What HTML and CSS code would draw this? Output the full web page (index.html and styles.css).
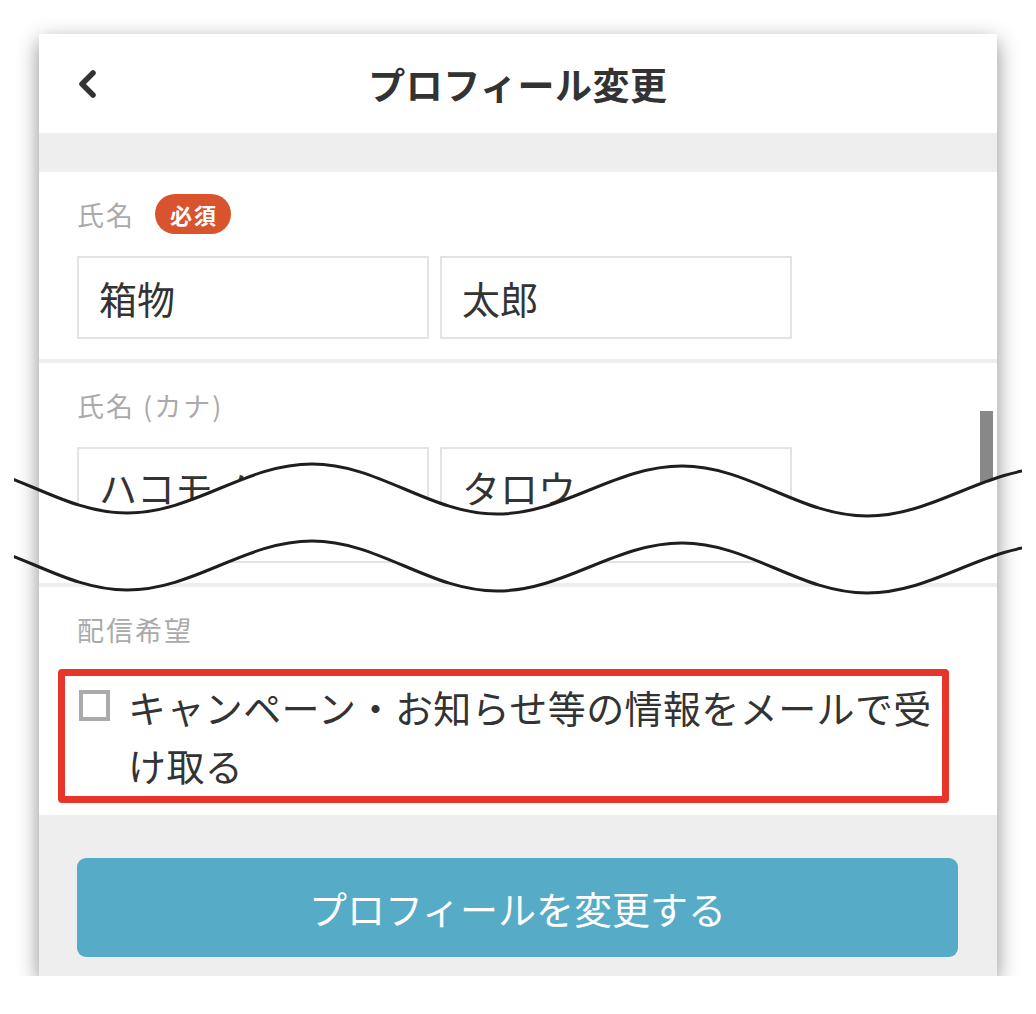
FILE: index.html
```html
<!DOCTYPE html>
<html>
  <head>
    <link rel="stylesheet" href="styles.css">
  </head>
  <body>
    <main class="card">
      <header class="topbar">
        <a class="back">
          <svg width="22" height="30" viewBox="0 0 22 30">
            <polyline points="17,4 6,15 17,26" fill="none" stroke="#333" stroke-width="5.5" stroke-linecap="round" stroke-linejoin="round"/>
          </svg>
        </a>
        <h1>プロフィール変更</h1>
      </header>
      <div class="band"></div>

      <form>
        <!-- name -->
        <section class="field">
          <h4>氏名 <span class="badge">必須</span></h4>
          <div class="pair">
            <input type="text" value="箱物">
            <input type="text" value="太郎">
          </div>
        </section>

        <!-- kana -->
        <section class="field kana">
          <h4>氏名 (カナ)</h4>
          <div class="pair">
            <input type="text" value="ハコモノ">
            <input type="text" value="タロウ">
          </div>
        </section>

        <!-- newsletter -->
        <section class="field optin">
          <h4>配信希望</h4>
          <label class="check">
            <span class="tick"></span>
            <span class="check-text">キャンペーン・お知らせ等の情報をメールで受け取る</span>
          </label>
        </section>

        <footer class="actions">
          <button type="submit">プロフィールを変更する</button>
        </footer>
      </form>

      <div class="scrollbar"></div>
    </main>

    <!-- cut mark -->
    <svg class="cut" width="1036" height="1014" viewBox="0 0 1036 1014">
      <defs>
        <clipPath id="card-area"><rect x="39" y="0" width="958" height="1014"/></clipPath>
        <clipPath id="line-area"><rect x="14" y="0" width="1008" height="1014"/></clipPath>
      </defs>
      <path clip-path="url(#card-area)" fill="#fff"
        d="M-58 463 C9.3 463 59.7 513 127 513 C194.3 513 244.7 464 312 464 C379.3 464 429.7 514 497 514 C564.3 514 614.7 466 682 466 C749.3 466 799.7 516 867 516 C934.3 516 984.7 468 1052 468
           L1052 545 C984.7 545 934.3 593 867 593 C799.7 593 749.3 543 682 543 C614.7 543 564.3 591 497 591 C429.7 591 379.3 541 312 541 C244.7 541 194.3 590 127 590 C59.7 590 9.3 540 -58 540 Z"/>
      <g clip-path="url(#line-area)" fill="none" stroke="#1e1e1e" stroke-width="3">
        <path d="M-58 463 C9.3 463 59.7 513 127 513 C194.3 513 244.7 464 312 464 C379.3 464 429.7 514 497 514 C564.3 514 614.7 466 682 466 C749.3 466 799.7 516 867 516 C934.3 516 984.7 468 1052 468"/>
        <path d="M-58 540 C9.3 540 59.7 590 127 590 C194.3 590 244.7 541 312 541 C379.3 541 429.7 591 497 591 C564.3 591 614.7 543 682 543 C749.3 543 799.7 593 867 593 C934.3 593 984.7 545 1052 545"/>
      </g>
    </svg>
  </body>
</html>
```

FILE: styles.css
```css
body {
  margin: 0;
  background: #fff;
  font-family: "Noto Sans CJK JP", "Noto Sans", sans-serif;
  color: #333;
}
.card {
  position: relative;
  width: 958px;
  margin: 34px 0 0 39px;
  background: #fff;
  box-shadow: 0 7px 20px rgba(0, 0, 0, 0.45);
}
.topbar {
  display: grid;
  grid-template-columns: 1fr auto 1fr;
  align-items: center;
  height: 99px;
  padding: 0 37px;
}
.back {
  display: flex;
  align-items: center;
}
.topbar h1 {
  margin: 0;
  font-size: 37px;
  font-weight: 700;
  letter-spacing: 0.5px;
  color: #333;
}
.band {
  height: 39px;
  background: #eee;
}
form {
  margin: 0;
}
.field {
  padding: 22px 38px 20px;
  border-bottom: 4px solid #eee;
}
.field h4 {
  display: flex;
  align-items: center;
  gap: 20px;
  height: 40px;
  margin: 0 0 22px;
  font-size: 27px;
  font-weight: 400;
  letter-spacing: 2px;
  color: #aaa;
}
.badge {
  height: 40px;
  padding: 0 13px 0 15px;
  border-radius: 20px;
  background: #d9532e;
  color: #fff;
  font-size: 22px;
  font-weight: 700;
  line-height: 40px;
}
.pair {
  display: flex;
  gap: 11px;
}
.pair input {
  width: 352px;
  height: 83px;
  box-sizing: border-box;
  padding: 0 20px;
  border: 2px solid #e3e3e3;
  border-radius: 0;
  font: inherit;
  font-size: 38px;
  color: #333;
  outline: none;
}
.kana .pair input {
  height: 116px;
  padding-bottom: 38px;
}
.optin {
  padding-bottom: 12px;
  border-bottom: 0;
}
.optin h4 {
  margin-bottom: 20px;
}
.check {
  display: flex;
  align-items: flex-start;
  gap: 18px;
  width: 891px;
  box-sizing: border-box;
  margin-left: -19px;
  padding: 2px 10px 2px 14px;
  border: 7px solid #e8352a;
  border-radius: 4px;
}
.tick {
  flex: none;
  width: 31px;
  height: 31px;
  box-sizing: border-box;
  margin-top: 12px;
  border: 4px solid #aaa;
  background: #fff;
}
.check-text {
  font-size: 38px;
  line-height: 58px;
  letter-spacing: 0.4px;
  color: #333;
}
.actions {
  padding: 43px 39px 19px 38px;
  background: #eee;
}
.actions button {
  display: block;
  width: 100%;
  height: 99px;
  border: 0;
  border-radius: 9px;
  background: #56abc7;
  color: #fff;
  font: inherit;
  font-size: 38px;
}
.scrollbar {
  position: absolute;
  top: 377px;
  right: 4px;
  width: 13px;
  height: 110px;
  background: #888;
}
.cut {
  position: absolute;
  top: 0;
  left: 0;
  pointer-events: none;
}
```
